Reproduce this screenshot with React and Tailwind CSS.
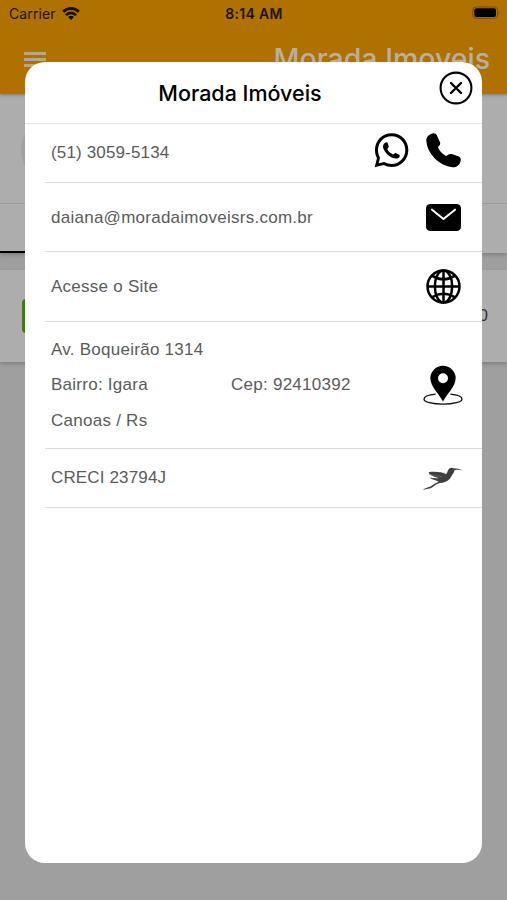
import React from 'react';

const WifiIcon = () => (
  <svg viewBox="0 0 54 40" className="w-[18px] h-[13px]">
    <g fill="none" stroke="#140d00" strokeWidth="8.5">
      <path d="M3 14.5C17 1 37 1 51 14.5" />
      <path d="M11.5 25C20 16 34 16 42.5 25" />
    </g>
    <path d="M18 31C23 26 31 26 36 31L27 40Z" fill="#140d00" />
  </svg>
);

const BatteryIcon = () => (
  <svg viewBox="0 0 90 42" className="w-[30px] h-[14px]">
    <rect x="5" y="3" width="75" height="34" rx="10" fill="none" stroke="#7a5000" strokeWidth="3" />
    <rect x="10" y="7" width="65" height="26" rx="6" fill="#000" />
    <path d="M83 14Q88 20 83 26Z" fill="#7a5000" />
  </svg>
);

const CloseIcon = () => (
  <svg viewBox="0 0 34 34" className="size-[34px]" fill="none" stroke="#000" strokeLinecap="round">
    <circle cx="17" cy="17" r="15.4" strokeWidth="2.1" />
    <path d="M12 12L22 22M22 12L12 22" strokeWidth="2.3" />
  </svg>
);

const WhatsappIcon = () => (
  <svg viewBox="0 0 105 105" className="size-[35px]">
    <path
      d="M53 1C25 1 3 23 3 51C3 60 5 68 9 75L2 103L29 96C36 100 44 102 53 102C81 102 103 79 103 51C103 23 81 1 53 1ZM53 93C45 93 38 91 31 87L14 91L18 74C14 67 12 59 12 51C12 28 30 10 53 10C76 10 94 28 94 51C94 74 76 93 53 93Z"
      fill="#000"
    />
    <path
      d="M29 34C33 27 39 26 41 30L44 40C45 44 41 46 40 49C43 56 49 61 56 64C60 65 62 59 65 60L76 65C79 67 77 73 73 75C66 79 56 76 47 70C38 64 33 57 29 49C26 43 27 38 29 34Z"
      fill="#000"
    />
  </svg>
);

const PhoneIcon = () => (
  <svg viewBox="197 38 105 105" className="size-[35px]">
    <path
      d="M198 62C197 50 208 40 220 39C225 39 229 43 231 48L239 66C241 72 238 75 233 80C237 92 248 103 258 107C263 102 268 100 274 101L294 108C301 111 303 117 300 125C297 135 287 142 277 141C235 135 201 100 198 62Z"
      fill="#000"
    />
  </svg>
);

const MailIcon = () => (
  <svg viewBox="0 0 105 81" className="w-[35px] h-[27px]">
    <rect width="105" height="81" rx="13" fill="#000" />
    <path
      d="M18 17L52.5 45L87 17"
      fill="none"
      stroke="#fff"
      strokeWidth="6"
      strokeLinecap="round"
      strokeLinejoin="round"
    />
  </svg>
);

const GlobeIcon = () => (
  <svg viewBox="0 0 105 105" className="size-[35px]" fill="none" stroke="#000" strokeWidth="7.5">
    <circle cx="52.5" cy="52.5" r="48" />
    <ellipse cx="52.5" cy="52.5" rx="26" ry="48" />
    <path d="M52.5 4V101M4 52.5H101M18 20Q52.5 42 87 20M18 85Q52.5 63 87 85" />
  </svg>
);

const PinIcon = () => (
  <svg viewBox="0 0 120 122" className="w-[40px] h-[41px]">
    <path
      d="M38 87C17 89 3 94 3 102C3 110 28 117 60 117C92 117 117 110 117 102C117 94 103 89 82 87"
      fill="none"
      stroke="#111"
      strokeWidth="4"
    />
    <path
      fillRule="evenodd"
      d="M60 109C50 88 22 64 22 39A38 37 0 0 1 98 39C98 64 70 88 60 109ZM60 24A15 15 0 1 0 60 54A15 15 0 1 0 60 24Z"
      fill="#000"
    />
  </svg>
);

const BirdIcon = () => (
  <svg viewBox="66 345 126 76" className="w-[42px] h-[25px]" fill="#3f3f3f">
    <path d="M144 359C146 352 155 348 161 352C170 353 181 353 189 359C180 356 171 356 164 358C163 366 157 371 154 377C150 388 140 393 128 396C116 397 109 400 102 406C96 412 86 415 79 415L68 418C76 410 84 410 91 407C101 402 106 396 116 393C110 389 97 387 87 381C97 382 108 383 117 382C105 378 88 375 85 364C101 361 127 363 138 370C142 367 142 363 144 359Z" />
    <path d="M88 371C103 374 116 375 128 379" fill="none" stroke="#8a8a8a" strokeWidth="1.5" />
  </svg>
);

const Row = ({ className, icons, children }) => (
  <div
    className={`ml-[20px] flex items-center justify-between border-b border-[#dcdcdc] pl-[6px] ${className}`}
  >
    {children}
    <div className="flex items-center">{icons}</div>
  </div>
);

// Tela de fundo, já escurecida pelo modal
const Background = () => (
  <div className="flex h-full flex-col bg-[#9f9f9f]">
    <div className="relative z-10 h-[94px] shrink-0 bg-[#af7100] shadow-[0_1px_3px_rgba(0,0,0,0.3)]">
      <div className="grid h-[26px] grid-cols-3 items-center pl-[9px] pr-[6px] font-['Inter'] text-[14px] text-[#1c1200]">
        <div className="flex items-center gap-[6px]">
          <span className="tracking-[0.1px]">Carrier</span>
          <WifiIcon />
        </div>
        <span className="pr-[2px] text-center text-[14px] font-semibold tracking-[0.3px]">
          8:14 AM
        </span>
        <div className="flex justify-end">
          <BatteryIcon />
        </div>
      </div>
      <div className="flex items-start justify-between pl-[24px] pr-[17px]">
        <div className="mt-[26px] flex w-[22px] flex-col gap-[3px]">
          <div className="h-[3px] bg-[#b8a684]" />
          <div className="h-[3px] bg-[#b8a684]" />
          <div className="h-[3px] bg-[#b8a684]" />
        </div>
        <span className="mt-[15px] whitespace-nowrap font-['Inter'] text-[28.5px] font-medium leading-[36px] text-[#b8b0a2]">
          Morada Imoveis
        </span>
      </div>
    </div>
    <div className="h-[159px] shrink-0 bg-[#adadad] shadow-[0_2px_4px_rgba(0,0,0,0.2)]">
      <div className="h-[110px] border-b border-[#9c9c9c] pl-[21px] pt-[20px]">
        <div className="size-[72px] rounded-full bg-[#a1a1a1]" />
      </div>
      <div className="mt-[47px] h-[2px] w-1/2 bg-black" />
    </div>
    <div className="mt-[17px] flex h-[92px] shrink-0 items-center justify-between bg-[#adadad] pl-[22px] pr-[19px] shadow-[0_2px_4px_rgba(0,0,0,0.2)]">
      <div className="h-[34px] w-[60px] rounded-[4px] bg-[#3c7d0c]" />
      <span className="font-['Liberation_Sans'] text-[17px] text-[#333]">0</span>
    </div>
  </div>
);

export default function App() {
  return (
    <div className="relative h-[900px] w-full overflow-hidden">
      <Background />
      <div className="absolute inset-x-[25px] top-[62px] z-20 h-[801px] overflow-hidden rounded-[20px] bg-white font-['Liberation_Sans'] text-[17px] tracking-[0.26px] text-[#5b5b5b]">
        <div className="relative flex h-[62px] items-center justify-center border-b border-[#e2e2e2] pr-[27px] pt-[2px]">
          <h1 className="whitespace-nowrap font-['Inter'] text-[21.5px] font-medium tracking-normal text-black">
            Morada Imóveis
          </h1>
          <button className="absolute right-[9px] top-[9px]">
            <CloseIcon />
          </button>
        </div>
        <Row
          className="h-[59px] pr-[21px]"
          icons={
            <div className="mb-[6px] flex items-center gap-[17px]">
              <WhatsappIcon />
              <PhoneIcon />
            </div>
          }
        >
          <span className="tracking-[0.15px]">(51) 3059-5134</span>
        </Row>
        <Row className="h-[69px] pr-[21px]" icons={<MailIcon />}>
          <span className="pt-[1px]">daiana@moradaimoveisrs.com.br</span>
        </Row>
        <Row className="h-[70px] pr-[21px]" icons={<GlobeIcon />}>
          <span>Acesse o Site</span>
        </Row>
        <Row className="h-[127px] pr-[19px]" icons={<PinIcon />}>
          <div className="flex w-[320px] flex-col leading-[35.5px]">
            <span>Av. Boqueirão 1314</span>
            <div className="flex">
              <span className="w-[180px]">Bairro: Igara</span>
              <span>Cep: 92410392</span>
            </div>
            <span>Canoas / Rs</span>
          </div>
        </Row>
        <Row className="h-[59px] pr-[18px]" icons={<BirdIcon />}>
          <span className="tracking-[0.15px]">CRECI 23794J</span>
        </Row>
      </div>
    </div>
  );
}
